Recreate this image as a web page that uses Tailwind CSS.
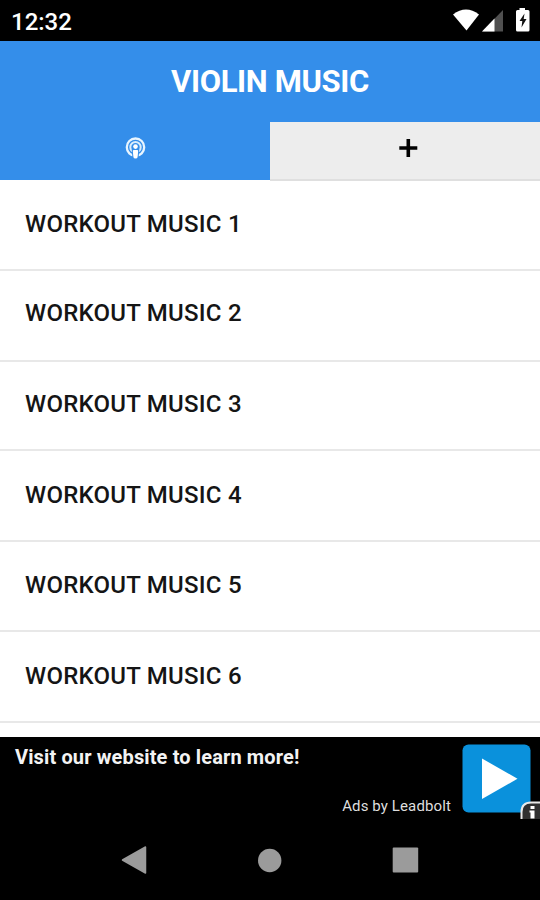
<!DOCTYPE html>
<html lang="en">
<head>
<meta charset="utf-8">
<title>Violin Music</title>
<script src="https://cdn.jsdelivr.net/npm/@tailwindcss/browser@4"></script>
</head>
<body class="bg-black">
<div class="flex h-[900px] w-[540px] flex-col overflow-hidden bg-white font-[Roboto,sans-serif]">
  <header class="flex h-[41px] shrink-0 items-center justify-between bg-black pl-[11px] text-white">
    <span class="pt-[3px] text-[24px] leading-none font-medium whitespace-nowrap">12:32</span>
    <svg class="h-[41px] w-[100px]" viewBox="440 0 100 41">
      <path d="M453 14.500Q466 4.500 479 14.500L466.500 30.500Z" fill="#fff"/>
      <path d="M503 10V31.500H482Z" fill="#505050"/>
      <path d="M494.500 18.500V31.500H482Z" fill="#fff"/>
      <path d="M519.500 8h5.500v2h3q1.500 0 1.500 1.500v18.500q0 1.500-1.500 1.500h-10.500q-1.500 0-1.500-1.500v-18.500q0-1.500 1.500-1.500h2Z" fill="#fff"/>
      <path d="M524.500 13.500L519.500 21h2.800l-.8 6.500 5-8.500h-2.800Z" fill="#111"/>
    </svg>
  </header>
  <h1 class="flex h-[81px] shrink-0 items-center justify-center bg-[#348eea] text-[31px] leading-none font-bold tracking-[-0.35px] whitespace-nowrap text-white"><span>VIOLIN MUSIC</span></h1>
  <nav class="flex h-[59px] shrink-0">
    <div class="h-[58px] w-1/2 bg-[#348eea]">
      <svg class="size-full" viewBox="0 122 270 58" fill="none">
        <circle cx="135.500" cy="147.200" r="8.700" stroke="#e8f5ff" stroke-width="2.300"/>
        <circle cx="135.500" cy="147.200" r="5.200" stroke="#d9edfc" stroke-width="2"/>
        <path d="M132.800 150h5.400l-.8 9.500h-3.800Z" fill="#348eea" stroke="#348eea" stroke-width="2"/>
        <circle cx="135.500" cy="146.600" r="2.300" fill="#fff"/>
        <path d="M132.800 151q0-1 1-1h3.400q1 0 1 1l-.6 6q-.2 1.500-2.100 1.500t-2.100-1.500Z" fill="#fff"/>
      </svg>
    </div>
    <div class="w-1/2 border-b-2 border-[#dfdfdf] bg-[#ededed]">
      <svg class="h-[57px] w-full" viewBox="270 122 270 57"><path d="M408.300 139v18M399.300 148h18" stroke="#000" stroke-width="3.600"/></svg>
    </div>
  </nav>
  <main class="h-[556px] shrink-0 overflow-hidden bg-white text-[24px] leading-none font-medium tracking-[0.25px] whitespace-nowrap text-[#151515]">
    <div class="flex h-[90px] items-center border-b-2 border-[#e8e8e8] pb-[3px] pl-[25px]"><span>WORKOUT MUSIC 1</span></div>
    <div class="flex h-[91px] items-center border-b-2 border-[#e8e8e8] pb-[6px] pl-[25px]"><span>WORKOUT MUSIC 2</span></div>
    <div class="flex h-[89px] items-center border-b-2 border-[#e8e8e8] pb-[3px] pl-[25px]"><span>WORKOUT MUSIC 3</span></div>
    <div class="flex h-[91px] items-center border-b-2 border-[#e8e8e8] pb-[2px] pl-[25px]"><span>WORKOUT MUSIC 4</span></div>
    <div class="flex h-[90px] items-center border-b-2 border-[#e8e8e8] pb-[3px] pl-[25px]"><span>WORKOUT MUSIC 5</span></div>
    <div class="flex h-[91px] items-center border-b-2 border-[#e8e8e8] pb-[2px] pl-[25px]"><span>WORKOUT MUSIC 6</span></div>
  </main>
  <section class="relative flex h-[83px] shrink-0 bg-black text-[#f3f3f3]">
    <div class="flex w-[451px] flex-col justify-between pt-[10px] pb-[6px] pl-[15px]">
      <span class="text-[20px] leading-none font-bold tracking-[0.13px] whitespace-nowrap">Visit our website to learn more!</span>
      <span class="self-end text-[15px] leading-none tracking-[0.12px] whitespace-nowrap text-[#dedede]">Ads by Leadbolt</span>
    </div>
    <svg class="mt-[7px] ml-[11px] size-[69px]" viewBox="462 744 69 69"><rect x="462.500" y="744.500" width="68" height="68" rx="6" fill="#0a91dc"/><path d="M482 758.500V799L517.500 778.700Z" fill="#fff"/></svg>
    <svg class="absolute right-0 bottom-[1px] h-[19px] w-[20px]" viewBox="520 800 20 19">
      <path d="M521.500 820V812Q521.500 802.500 531 802.500H541V820" fill="#303030" stroke="#e9e9e9" stroke-width="2"/>
      <path d="M530.500 806h4v3h-4ZM529.500 810.500h5v8h-4v-6h-1Z" fill="#fff"/>
    </svg>
  </section>
  <footer class="h-[80px] shrink-0 bg-black">
    <svg class="h-[80px] w-[540px]" viewBox="0 820 540 80" fill="#9b9b9b" stroke="#9b9b9b" stroke-linejoin="round">
      <path d="M122.500 860L145.500 847V873Z" stroke-width="1.500"/>
      <circle cx="269.700" cy="860.500" r="11.700" stroke="none"/>
      <rect x="392.700" y="847.500" width="25.500" height="25" rx="1" stroke="none"/>
    </svg>
  </footer>
</div>
</body>
</html>
